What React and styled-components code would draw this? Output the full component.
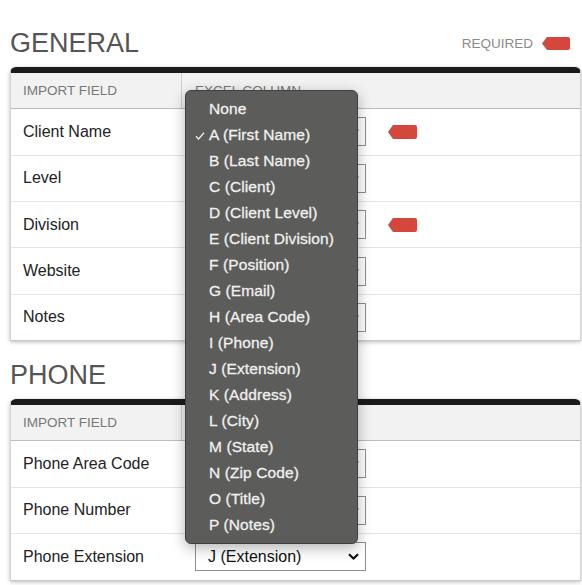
import React from "react";
import styled, { createGlobalStyle } from "styled-components";

const Global = createGlobalStyle`
  html, body { margin: 0; padding: 0; background: #fff; }
  body { font-family: "Liberation Sans", Arial, Helvetica, sans-serif; overflow: hidden; }
  * { box-sizing: border-box; }
`;

const Page = styled.div`
  position: relative;
  padding: 29px 1px 0 10px;
  width: 582px;
`;

const Section = styled.section`
  margin-bottom: 20px;
`;

const SectionHeader = styled.div`
  display: flex;
  align-items: center;
  justify-content: space-between;
  margin-bottom: 10px;
  padding-right: 11px;
`;

const Title = styled.h2`
  margin: 0;
  font-size: 27px;
  line-height: 28px;
  font-weight: 400;
  color: #555;
`;

const Legend = styled.div`
  display: flex;
  align-items: center;
  gap: 9px;
  font-size: 13.5px;
  color: #8a8a8a;
`;

const Card = styled.div`
  border-top: 6px solid #1b1b1b;
  border-radius: 6px 6px 0 0;
  background: #fff;
  box-shadow: 0 1px 4px rgba(0, 0, 0, 0.28);
  border-left: 1px solid #d4d4d4;
  border-right: 1px solid #d4d4d4;
  border-bottom: 1px solid #c8c8c8;
`;

const HeadRow = styled.div`
  display: grid;
  grid-template-columns: 170px 1fr;
  height: 36px;
  background: #f2f2f2;
  border-bottom: 1px solid #bcbcbc;
`;

const HeadCell = styled.div`
  display: flex;
  align-items: center;
  padding-left: ${(p) => (p.$first ? "12px" : "13px")};
  font-size: 13.5px;
  color: #777;
  border-left: ${(p) => (p.$first ? "none" : "1px solid #cfcfcf")};
`;

const Row = styled.div`
  display: grid;
  grid-template-columns: 170px 1fr;
  height: ${(p) => (p.$first ? "45.6px" : "46.4px")};
  border-top: ${(p) => (p.$first ? "none" : "1px solid #e3e3e3")};
`;

const FieldCell = styled.div`
  display: flex;
  align-items: center;
  padding-left: 12px;
  font-size: 16px;
  color: #222;
`;

const SelectCell = styled.div`
  display: flex;
  align-items: center;
  padding-left: 14px;
  gap: 22px;
`;

const SelectBox = styled.div`
  width: 171px;
  height: 29px;
  border: 1px solid #8e8e8e;
  background: #fff;
  display: flex;
  align-items: center;
  justify-content: space-between;
  padding: 0 6px 0 12px;
  font-size: 16px;
  color: #111;
  white-space: nowrap;
  overflow: hidden;
`;

const Menu = styled.div`
  position: absolute;
  left: 185px;
  top: 90px;
  width: 173px;
  padding: 5px 0;
  background: #5c5c5a;
  border: 1px solid #404040;
  border-radius: 6px;
  box-shadow: 0 4px 14px rgba(0, 0, 0, 0.3);
  z-index: 10;
`;

const MenuItem = styled.div`
  position: relative;
  height: 26px;
  display: flex;
  align-items: center;
  padding-left: 23px;
  font-size: 15.5px;
  color: #f0f0f0;
  -webkit-text-stroke: 0.3px #f0f0f0;
  letter-spacing: 0.1px;
  white-space: nowrap;
`;

const Check = styled.svg`
  position: absolute;
  left: 9px;
  top: 10px;
`;

const Tag = ({ w = 29, h = 14 }) => (
  <svg width={w} height={h} viewBox={`0 0 ${w} ${h}`}>
    <path
      d={`M0 ${h / 2} L5 0 H${w - 2} Q${w} 0 ${w} 2 V${h - 2} Q${w} ${h} ${w - 2} ${h} H5 Z`}
      fill="#d3473d"
    />
  </svg>
);

const Chevron = () => (
  <svg width="11" height="7" viewBox="0 0 11 7">
    <path d="M1 1.2 L5.5 5.5 L10 1.2" fill="none" stroke="#111" strokeWidth="2.2" />
  </svg>
);

const options = [
  "None",
  "A (First Name)",
  "B (Last Name)",
  "C (Client)",
  "D (Client Level)",
  "E (Client Division)",
  "F (Position)",
  "G (Email)",
  "H (Area Code)",
  "I (Phone)",
  "J (Extension)",
  "K (Address)",
  "L (City)",
  "M (State)",
  "N (Zip Code)",
  "O (Title)",
  "P (Notes)",
];

const general = [
  { field: "Client Name", value: "A (First Name)", req: true },
  { field: "Level", value: "D (Client Level)" },
  { field: "Division", value: "E (Client Division)", req: true },
  { field: "Website", value: "None" },
  { field: "Notes", value: "P (Notes)" },
];

const phone = [
  { field: "Phone Area Code", value: "H (Area Code)" },
  { field: "Phone Number", value: "I (Phone)" },
  { field: "Phone Extension", value: "J (Extension)" },
];

const Table = ({ rows }) => (
  <Card>
    <HeadRow>
      <HeadCell $first>IMPORT FIELD</HeadCell>
      <HeadCell>EXCEL COLUMN</HeadCell>
    </HeadRow>
    {rows.map((r, i) => (
      <Row key={r.field} $first={i === 0}>
        <FieldCell>{r.field}</FieldCell>
        <SelectCell>
          <SelectBox>
            <span>{r.value}</span>
            <Chevron />
          </SelectBox>
          {r.req && <Tag />}
        </SelectCell>
      </Row>
    ))}
  </Card>
);

export default function App() {
  return (
    <Page>
      <Global />
      <Section>
        <SectionHeader>
          <Title>GENERAL</Title>
          <Legend>
            REQUIRED
            <Tag w={28} h={13} />
          </Legend>
        </SectionHeader>
        <Table rows={general} />
      </Section>
      <Section>
        <SectionHeader>
          <Title>PHONE</Title>
        </SectionHeader>
        <Table rows={phone} />
      </Section>
      <Menu>
        {options.map((o, i) => (
          <MenuItem key={o}>
            {i === 1 && (
              <Check width="10" height="8" viewBox="0 0 10 8">
                <path d="M1 4.2 L3.6 7 L9 0.8" fill="none" stroke="#ececec" strokeWidth="1.3" />
              </Check>
            )}
            {o}
          </MenuItem>
        ))}
      </Menu>
    </Page>
  );
}
